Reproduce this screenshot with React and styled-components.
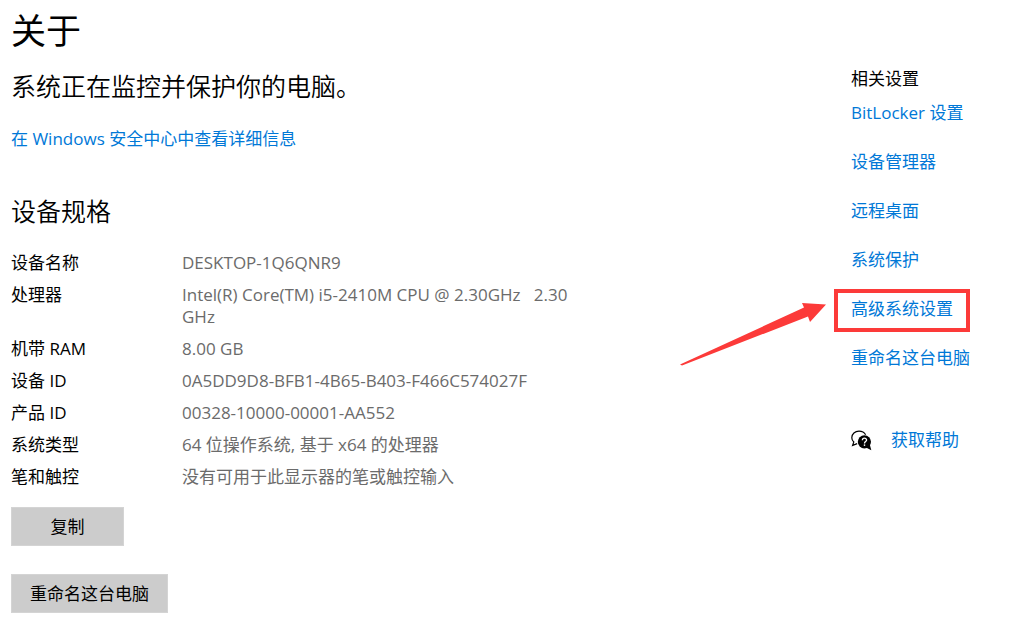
import React                          from 'react';
import styled, { createGlobalStyle }  from 'styled-components';

const specs = [
    { label: '设备名称', value: 'DESKTOP-1Q6QNR9' },
    { label: '处理器', value: 'Intel(R) Core(TM) i5-2410M CPU @ 2.30GHz\u00a0\u00a0 2.30 GHz' },
    { label: '机带 RAM', value: '8.00 GB' },
    { label: '设备 ID', value: '0A5DD9D8-BFB1-4B65-B403-F466C574027F' },
    { label: '产品 ID', value: '00328-10000-00001-AA552' },
    { label: '系统类型', value: '64 位操作系统, 基于 x64 的处理器' },
    { label: '笔和触控', value: '没有可用于此显示器的笔或触控输入' },
];

const related = [
    { text: 'BitLocker 设置' },
    { text: '设备管理器' },
    { text: '远程桌面' },
    { text: '系统保护' },
    { text: '高级系统设置', marked: true },
    { text: '重命名这台电脑' },
];

/**
 * Two chat bubbles, the front one filled with a question mark.
 */
function HelpIcon() {
    return (
        <HelpSvg viewBox="0 0 21 21" aria-hidden="true">
            <path
                d="M6.2 13.6 L1.6 15.4 L2.8 12 C1.5 10.9 0.8 9.4 0.8 7.7 C0.8 4 4 1.2 8 1.2 C11 1.2 13.4 2.6 14.6 4.8"
                fill="none"
                stroke="#000"
                strokeWidth="1.2"
            />
            <circle cx="13.4" cy="11.8" r="6.6" fill="#000" />
            <path d="M15 17.5 L20.3 20.2 L18.8 14.5 Z" fill="#000" />
            <path
                d="M11.4 10.2 C11.4 7.6 15.6 7.6 15.6 10 C15.6 11.6 13.5 11.6 13.5 13.4"
                fill="none"
                stroke="#fff"
                strokeWidth="1.3"
            />
            <rect x="12.8" y="14.4" width="1.4" height="1.5" fill="#fff" />
        </HelpSvg>
    );
}

function Arrow() {
    return (
        <ArrowSvg viewBox="0 0 146 64" aria-hidden="true">
            <path d="M0 62.5 L124 5.5 L122 1 L146 2.5 L130 20 L128 14.5 L2 63.5 Z" fill="#fc3a39" />
        </ArrowSvg>
    );
}

function App() {
    return (
        <Page>
            <GlobalStyle />
            <Main>
                <Title>关于</Title>
                <Status>系统正在监控并保护你的电脑。</Status>
                <TextLink href="#security">在 Windows 安全中心中查看详细信息</TextLink>
                <SectionTitle>设备规格</SectionTitle>
                <SpecTable>
                    <tbody>
                        {specs.map((spec) => (
                            <tr key={spec.label}>
                                <SpecLabel scope="row">{spec.label}</SpecLabel>
                                <SpecValue>{spec.value}</SpecValue>
                            </tr>
                        ))}
                    </tbody>
                </SpecTable>
                <Actions>
                    <GreyButton type="button" $wide>复制</GreyButton>
                    <GreyButton type="button">重命名这台电脑</GreyButton>
                </Actions>
            </Main>
            <Sidebar>
                <SidebarTitle>相关设置</SidebarTitle>
                <LinkList>
                    {related.map((item) => (
                        <LinkItem key={item.text}>
                            <TextLink href="#related">{item.text}</TextLink>
                            {item.marked && <Marker />}
                            {item.marked && <Arrow />}
                        </LinkItem>
                    ))}
                </LinkList>
                <Help>
                    <HelpIcon />
                    <TextLink href="#help">获取帮助</TextLink>
                </Help>
            </Sidebar>
        </Page>
    );
}

const GlobalStyle = createGlobalStyle`
* {
    box-sizing: border-box;
}
body {
    margin: 0;
    background: #fff;
    color: #000;
    font-family: "Open Sans", "Noto Sans CJK SC", sans-serif;
    font-size: 17px;
    line-height: 22px;
}
`

const Page = styled.div`
display: flex;
justify-content: space-between;
padding: 8px 11px 10px;
`

const Main = styled.main`
flex: 1;
min-width: 0;
`

const Title = styled.h1`
margin: 0 0 15px;
font-size: 35px;
font-weight: 400;
line-height: 46px;
`

const Status = styled.p`
margin: 0 0 25px;
font-size: 25px;
font-weight: 350;
line-height: 34px;
`

const SectionTitle = styled.h2`
margin: 44px 0 19px;
font-size: 25px;
font-weight: 350;
line-height: 34px;
`

const TextLink = styled.a`
color: #0078d7;
text-decoration: none;
`

const SpecTable = styled.table`
border-collapse: collapse;
`

const SpecLabel = styled.th`
width: 171px;
padding: 5px 0;
font-weight: 400;
text-align: left;
vertical-align: top;
`

const SpecValue = styled.td`
max-width: 400px;
padding: 5px 0;
color: #6b6b6b;
vertical-align: top;
`

const Actions = styled.div`
display: flex;
flex-direction: column;
align-items: flex-start;
gap: 28px;
margin-top: 14px;
`

const GreyButton = styled.button`
min-width: ${(props) => (props.$wide ? '113px' : '0')};
min-height: 39px;
padding: 7px 18px;
border: 1px solid #d4d4d4;
background: #ccc;
color: #000;
font: inherit;
`

const Sidebar = styled.aside`
width: 163px;
padding-top: 60px;
`

const SidebarTitle = styled.h2`
margin: 0 0 12px;
font-size: 17px;
font-weight: 400;
line-height: 22px;
`

const LinkList = styled.ul`
display: flex;
flex-direction: column;
gap: 27px;
margin: 0;
padding: 0;
list-style: none;
`

const LinkItem = styled.li`
position: relative;
`

/* red frame drawn over the link, it takes no clicks */
const Marker = styled.span`
position: absolute;
top: -9px;
left: -17px;
width: 136px;
height: 43px;
border: 4px solid #fc3a39;
pointer-events: none;
`

const ArrowSvg = styled.svg`
position: absolute;
top: 4px;
right: 188px;
width: 146px;
height: 64px;
pointer-events: none;
`

const Help = styled.div`
display: flex;
align-items: center;
gap: 19px;
margin-top: 60px;
`

const HelpSvg = styled.svg`
width: 21px;
height: 21px;
`

export default App;
